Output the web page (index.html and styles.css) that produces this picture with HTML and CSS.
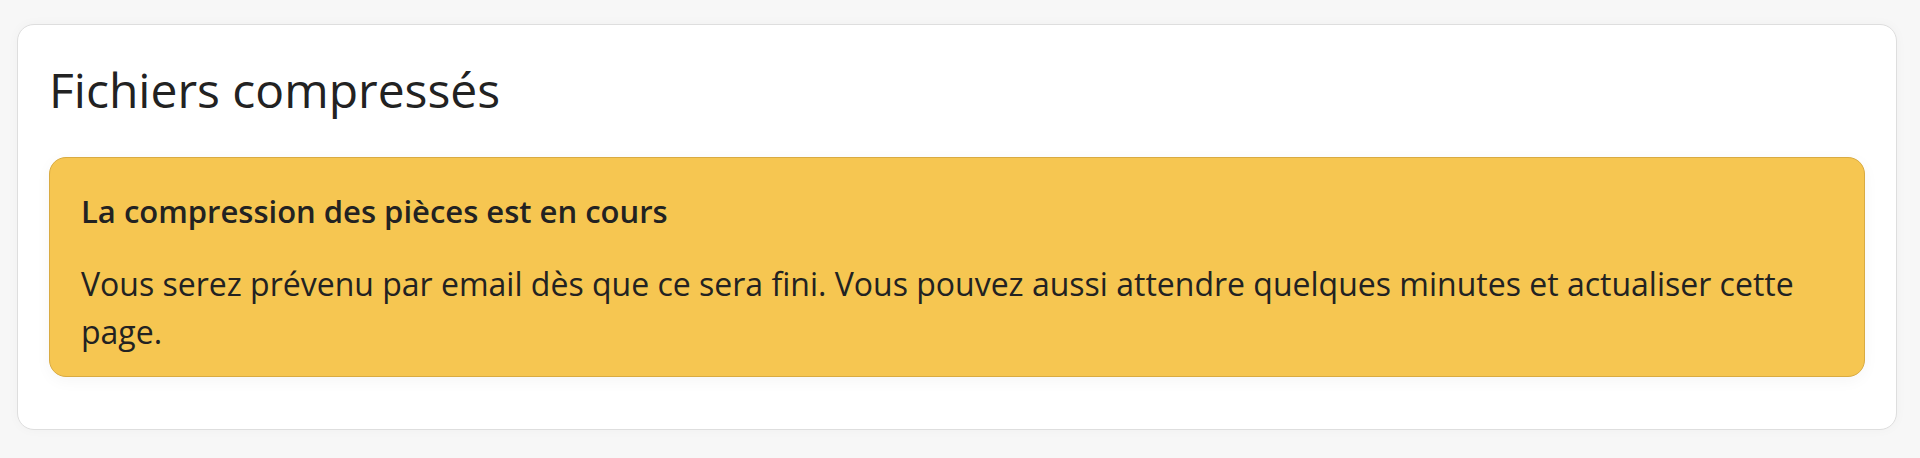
FILE: index.html
```html
<!DOCTYPE html>
<html lang="fr">
<head>
<meta charset="utf-8">
<title>Fichiers compressés</title>
<link rel="stylesheet" href="styles.css">
</head>
<body>
<main class="page">
  <section class="card">
    <h1 class="card-title">Fichiers compressés</h1>
    <div class="alert">
      <h2 class="alert-title">La compression des pièces est en cours</h2>
      <p class="alert-text">Vous serez prévenu par email dès que ce sera fini. Vous pouvez aussi attendre quelques minutes et actualiser cette page.</p>
    </div>
  </section>
</main>
</body>
</html>
```

FILE: styles.css
```css
html, body {
  margin: 0;
  padding: 0;
  background: #f7f7f7;
}
body {
  font-family: "Open Sans", "Noto Sans", sans-serif;
  color: #222222;
}
.page {
  padding: 24px 23px 28px 17px;
}
.card {
  background: #ffffff;
  border: 1.5px solid #dedede;
  border-radius: 17px;
  padding: 32px 31px 52px 31px;
  box-shadow: 0 0 12px rgba(0, 0, 0, 0.03);
}
.card-title {
  margin: 0 0 34px 0;
  font-size: 48px;
  font-weight: 400;
  line-height: 66px;
}
.alert {
  background: #f6c651;
  border: 1.5px solid #d9ab42;
  border-radius: 17px;
  padding: 29px 32px 20px 31px;
  box-shadow: 0 4px 16px rgba(0, 0, 0, 0.04);
}
.alert-title {
  margin: 0 0 25px 0;
  font-size: 31px;
  font-weight: 600;
  line-height: 48px;
}
.alert-text {
  margin: 0;
  font-size: 32px;
  font-weight: 400;
  line-height: 48px;
}
```
